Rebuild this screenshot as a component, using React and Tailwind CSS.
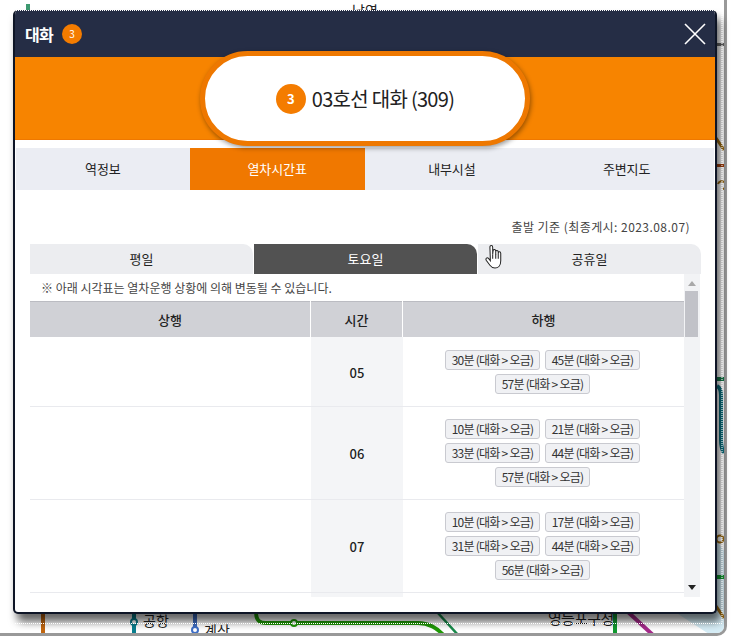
const FONT = "font-['Noto_Sans_CJK_KR','Noto_Sans',sans-serif]";

function Badge({ m }) {
  return (
    <span className="w-[95px] h-[20px] flex items-center justify-center rounded-[3px] border border-[#c9cad0] bg-[#f0f1f4] text-[12px] leading-none tracking-[-0.75px] text-[#333]">
      {m}분 (대화 &gt; 오금)
    </span>
  );
}

function Row({ h, hour, mins }) {
  return (
    <div className="flex border-b border-[#e9eaee]" style={{ height: h }}>
      <div className="w-[281px]" />
      <div className="w-[92px] bg-[#f4f5f7] flex items-center justify-center pt-[2px] text-[13px] font-medium text-[#222]">{hour}</div>
      <div className="flex-1 flex flex-wrap content-center justify-center gap-x-[5px] gap-y-[4px] pl-[40px] pr-[42px]">
        {mins.map((m) => <Badge key={m} m={m} />)}
      </div>
    </div>
  );
}

function MapBack() {
  return (
    <svg className="absolute inset-0" width="731" height="639" viewBox="0 0 731 639" fill="none">
      <rect x="26" y="4" width="4" height="6" fill="#3d9970" />
      <path d="M675 612L712 636H731V560L716 540V612Z" fill="#d6edf6" />
      <path d="M43 610V636" stroke="#c2660f" strokeWidth="4" />
      <path d="M134 610V636" stroke="#0a7f8f" strokeWidth="4" />
      <circle cx="134" cy="622" r="3" fill="#fff" stroke="#0a7f8f" strokeWidth="2" />
      <path d="M195 610V636" stroke="#3f6fc6" strokeWidth="4" />
      <circle cx="195" cy="630" r="3" fill="#fff" stroke="#3f6fc6" strokeWidth="2" />
      <path d="M256 612C256 621 260 623 266 623H418C428 623 438 628 444 636" stroke="#1f9a06" strokeWidth="4" />
      <circle cx="294" cy="623" r="3" fill="#fff" stroke="#1f9a06" strokeWidth="2" />
      <path d="M437 612L459 636" stroke="#188a4a" strokeWidth="2.5" />
      <path d="M615 612V636" stroke="#109a30" strokeWidth="4" />
      <path d="M628 612L654 636" stroke="#a52a8a" strokeWidth="4" />
      <rect x="716" y="43" width="8" height="3" fill="#666" />
      <path d="M716 138L724 150" stroke="#9c6a10" strokeWidth="3" />
      <rect x="716" y="164" width="8" height="3" fill="#a5410f" />
      <path d="M718 184a4 4 0 1 1 5 5" stroke="#9c6a10" strokeWidth="2" />
      <rect x="716" y="377" width="8" height="4" fill="#167a4a" />
      <path d="M717 386Q721 388 721 395V440Q721 448 724 453" stroke="#0a6f7f" strokeWidth="4" />
      <circle cx="720" cy="539" r="3.5" fill="#fff" stroke="#9c6a10" strokeWidth="2" />
      <rect x="716" y="575" width="8" height="4" fill="#109a30" />
      <path d="M716 606L724 618" stroke="#9c6a10" strokeWidth="3" />
    </svg>
  );
}

export default function App() {
  return (
    <div className={`relative w-[731px] h-[639px] bg-white overflow-hidden ${FONT}`}>
      <div className="absolute left-0 top-0 w-[727px] h-[636px] border-r-[3px] border-b-[3px] border-[#999] rounded-br-[10px] overflow-hidden">
        <MapBack />
        <span className="absolute left-[352px] top-[0px] text-[14px] leading-[20px] text-[#222]">남영</span>
        <span className="absolute left-[143px] top-[610px] text-[14px] leading-[20px] text-[#222]">공항</span>
        <span className="absolute left-[204px] top-[620px] text-[14px] leading-[20px] text-[#222]">계산</span>
        <span className="absolute left-[548px] top-[608px] text-[15px] leading-[20px] tracking-[-0.7px] text-[#222]">영등포구청</span>
        <span className="absolute left-[60px] top-[629px] text-[14px] leading-[20px] text-[#222]">부천</span>
        <span className="absolute left-[285px] top-[629px] text-[14px] leading-[20px] text-[#222]">화곡</span>
        <span className="absolute left-[673px] top-[629px] text-[14px] leading-[20px] text-[#222]">여의</span>
      </div>

      <div className="absolute left-[13px] top-[10px] w-[704px] h-[604px] bg-white rounded-[5px] border-x-2 border-b-2 border-[#0e1526] shadow-[4px_8px_9px_rgba(0,0,0,0.6)] overflow-hidden flex flex-col">
        <div className="h-[47px] shrink-0 bg-[#252d45] flex items-center -mx-[2px] pl-[12px] pr-[11px]">
          <span className="text-[16px] font-bold text-white tracking-[-0.7px]">대화</span>
          <span className="ml-[9px] w-[20px] h-[20px] rounded-full bg-[#f47c00] text-white text-[10px] flex items-center justify-center">3</span>
          <svg className="ml-auto" width="22" height="22" viewBox="0 0 22 22" stroke="#fff" strokeWidth="1.6">
            <path d="M1 1L21 21M21 1L1 21" />
          </svg>
        </div>

        <div className="h-[83px] shrink-0 bg-[#f78400] border-b border-[#ee7800] relative">
          <div className="absolute left-[185px] top-[-6px] w-[330px] h-[95px] rounded-[48px] border-[5px] border-[#ee7800] bg-white shadow-[1px_2px_5px_rgba(0,0,0,0.4)] flex items-center justify-center gap-[6px]">
            <span className="w-[30px] h-[30px] rounded-full bg-[#f47c00] text-white text-[13px] font-bold flex items-center justify-center">3</span>
            <span className="text-[20px] tracking-[-0.7px] text-[#222]">03호선 대화 (309)</span>
          </div>
        </div>

        <div className="mt-[8px] h-[42px] shrink-0 flex bg-[#ebedf3] ml-[1px] mr-[1px] text-[13px] tracking-[-0.1px] text-[#222]">
          <div className="w-[174px] flex items-center justify-center">역정보</div>
          <div className="w-[175px] flex items-center justify-center bg-[#f07800] text-white">열차시간표</div>
          <div className="w-[175px] flex items-center justify-center">내부시설</div>
          <div className="w-[175px] flex items-center justify-center">주변지도</div>
        </div>

        <div className="mt-[28px] pr-[25px] text-right text-[12px] leading-[18px] tracking-[0.45px] text-[#444]">출발 기준 (최종게시: 2023.08.07)</div>

        <div className="mt-[8px] ml-[15px] w-[671px] h-[30px] shrink-0 flex gap-[1px] text-[13px] text-[#222]">
          <div className="w-[223px] bg-[#ecedf0] rounded-tr-[10px] flex items-center justify-center">평일</div>
          <div className="w-[223px] bg-[#525252] rounded-tr-[10px] flex items-center justify-center text-white">토요일</div>
          <div className="w-[223px] bg-[#ecedf0] rounded-tr-[10px] flex items-center justify-center">공휴일</div>
        </div>

        <div className="ml-[15px] w-[670px] h-[323px] flex overflow-hidden">
          <div className="w-[654px] shrink-0">
            <div className="h-[27px] pl-[11px] flex items-center text-[12px] tracking-[0px] text-[#444]">※ 아래 시각표는 열차운행 상황에 의해 변동될 수 있습니다.</div>
            <div className="h-[36px] flex gap-[1px] bg-white text-[13px] font-medium text-[#222]">
              <div className="w-[280px] bg-[#d0d1d6] border-t border-[#bbbcc2] flex items-center justify-center">상행</div>
              <div className="w-[91px] bg-[#d0d1d6] border-t border-[#bbbcc2] flex items-center justify-center">시간</div>
              <div className="flex-1 bg-[#d0d1d6] border-t border-[#bbbcc2] flex items-center justify-center">하행</div>
            </div>
            <Row h={70} hour="05" mins={[30, 45, 57]} />
            <Row h={93} hour="06" mins={[10, 21, 33, 44, 57]} />
            <Row h={93} hour="07" mins={[10, 17, 31, 44, 56]} />
            <div className="h-[5px] ml-[281px] w-[92px] bg-[#f4f5f7]" />
          </div>
          <div className="w-[16px] shrink-0 bg-[#f2f3f5] flex flex-col items-center relative">
            <svg className="mt-[7px]" width="8" height="5" viewBox="0 0 8 5"><path d="M0 5H8L4 0Z" fill="#a9a9a9" /></svg>
            <div className="absolute top-[17px] left-[1px] w-[13px] h-[46px] bg-[#c1c2c8]" />
            <svg className="absolute bottom-[7px] left-[4px]" width="8" height="5" viewBox="0 0 8 5"><path d="M0 0H8L4 5Z" fill="#222" /></svg>
          </div>
        </div>
      </div>

      <svg className="absolute left-0 top-0 pointer-events-none" width="731" height="639" viewBox="0 0 731 639" fill="none">
        <path d="M14 10.5H715M722 11V623M15 623.5H722" stroke="#fff" strokeWidth="1" strokeDasharray="1 1" />
      </svg>

      <svg className="absolute left-[485px] top-[244px]" width="20" height="25" viewBox="0 0 21 27" fill="#fff" stroke="#222" strokeWidth="1.1">
        <path d="M5 3.5C5 1 8 1 8 3.5V11L8.5 7C9 5.5 11 5.5 11.3 7.5V11.5V8C11.5 6.5 13.8 6.5 14 8.5V12V9.5C14.3 8 16.5 8 16.7 10V18C16.7 23 14 26 10.5 26C7.5 26 6.5 25 5 23L1 17.5C0 15.5 2 14 3.5 15.5L5.5 18Z" />
        <path d="M8 11V16M11.3 11V16M14 12V16" fill="none" />
      </svg>
    </div>
  );
}
